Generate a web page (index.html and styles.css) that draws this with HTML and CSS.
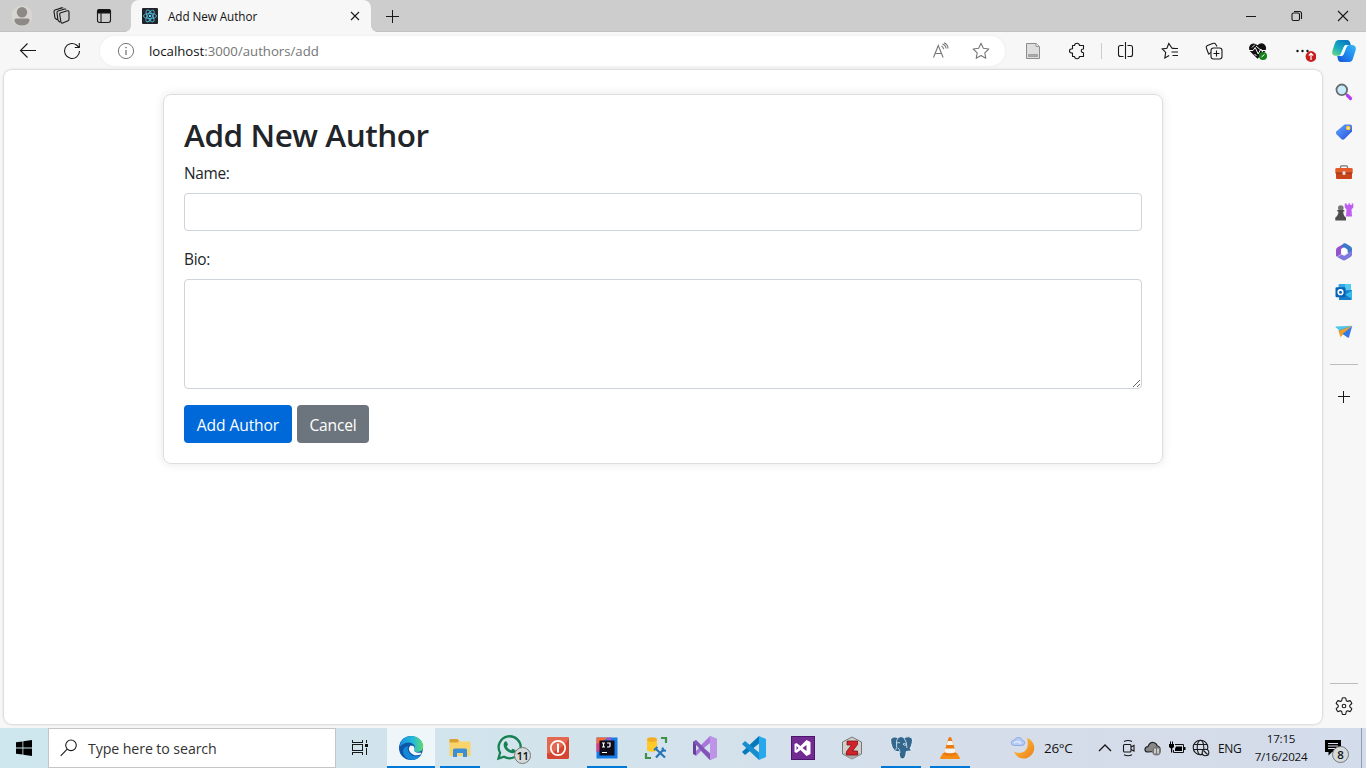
FILE: index.html
```html
<!DOCTYPE html>
<html lang="en">
<head>
<meta charset="utf-8">
<title>Add New Author</title>
<link rel="stylesheet" href="styles.css">
</head>
<body>
<header class="tabstrip">
  <div class="slot w44"><svg width="22" height="22" viewBox="0 0 22 22"><circle cx="11" cy="11" r="10.5" fill="#d8d6d3"/><circle cx="11" cy="7.3" r="5.2" fill="#8d8984"/><path d="M3.3 15.3q0-1.800 2-1.800h11.400q2 0 2 1.800-1.300 5.200-7.700 5.200t-7.700-5.200z" fill="#8d8984"/></svg></div>
  <div class="slot w36"><svg class="line" width="20" height="20" viewBox="0 0 20 20"><path d="m8.800 6.800 6.500-2q1.500-.3 1.700 1.200v7.300q0 1-1 1.500l-5.200 2.200q-1.500.4-1.900-1.100L7.700 8.500Q7.500 7.200 8.800 6.800z"/><path d="m6 14.500-1-7.500q-.1-1.400 1-1.900l6.700-2.100q1-.2 1.400.5M3 12.200l-1-6.500q-.1-1.300 1-1.800l6.700-2q1-.3 1.400.4M6 14.500l2.300 1.800M3 12.200l2.300 1.600"/></svg></div>
  <div class="slot w48"><svg class="line" width="16" height="16" viewBox="0 0 16 16"><rect x="1.500" y="1.500" width="13" height="13" rx="2.200"/><path d="M1.500 5V3.500q0-2 2-2h9q2 0 2 2V5z" fill="#111"/><path d="M5 5v9.500"/></svg></div>
  <div class="tab">
    <svg width="16" height="16" viewBox="0 0 16 16"><rect width="16" height="16" rx="1" fill="#20232a"/><g fill="none" stroke="#4fb3d0" stroke-width=".9"><ellipse cx="8" cy="8" rx="6.600" ry="2.600"/><ellipse cx="8" cy="8" rx="6.600" ry="2.600" transform="rotate(60 8 8)"/><ellipse cx="8" cy="8" rx="6.600" ry="2.600" transform="rotate(120 8 8)"/></g><circle cx="8" cy="8" r="1.200" fill="#61dafb"/></svg>
    <span class="tab-title">Add New Author</span>
    <svg class="line dark" width="10" height="10" viewBox="0 0 10 10"><path d="m1 1 8 8M9 1 1 9"/></svg>
  </div>
  <div class="slot w42"><svg class="line crisp" width="14" height="14" viewBox="0 0 14 14"><path d="M7.500 1v13M1 7.500h13"/></svg></div>
  <div class="window-controls">
    <div class="slot w46"><svg class="line crisp" width="10" height="10" viewBox="0 0 10 10"><path d="M0 5.500h10"/></svg></div>
    <div class="slot w46"><svg class="line" width="12" height="12" viewBox="0 0 12 12"><rect x="1" y="3" width="7.500" height="7.500" rx="1.500"/><path d="M3 1.500h5.500q2 0 2 2V9"/></svg></div>
    <div class="slot w46"><svg class="line" width="12" height="12" viewBox="0 0 12 12"><path d="m1 1 10 10M11 1 1 11"/></svg></div>
  </div>
</header>

<div class="browser">
  <div class="browser-main">
    <nav class="toolbar">
      <div class="slot w56"><svg class="line" width="18" height="18" viewBox="0 0 18 18"><path d="M17 8.500H1.500M8.500 1.500l-7 7 7 7"/></svg></div>
      <div class="slot w32"><svg class="line" width="18" height="18" viewBox="0 0 18 18"><path d="M16.500 9A7.500 7.500 0 1 1 13.500 3l2.700 2.400M16.300 1v4.500h-4.500"/></svg></div>
      <div class="address">
        <svg width="18" height="18" viewBox="0 0 18 18" fill="none" stroke="#767676"><circle cx="9" cy="9" r="7.600"/><path d="M9 8v5" stroke-width="1.300"/><circle cx="9" cy="5.600" r=".5"/></svg>
        <span class="url"><b>localhost</b>:3000/authors/add</span>
        <svg class="read" width="18" height="18" viewBox="0 0 18 18" fill="none" stroke="#777" stroke-width="1.100"><path d="M1.500 15.500 6.300 3.500l4.800 12M3.200 11.500h6.200M9.500 4q2 1 2 3.200M10.500 2q3.400 1.300 3.500 4.500M12 .8q4 1.700 4 5.700"/></svg>
        <svg width="18" height="18" viewBox="0 0 18 18" fill="none" stroke="#777" stroke-width="1.100" stroke-linejoin="round"><path d="m9 1.300 2.300 5 5.500.7-4 3.800 1 5.500L9 13.600l-4.800 2.700 1-5.500-4-3.800 5.500-.7z"/></svg>
      </div>
      <div class="slot w44 after-address"><svg width="16" height="18" viewBox="0 0 16 18"><path d="M1.500 1.500h9.500l3.500 3v12h-13z" fill="#dedede" stroke="#8c8c8c"/><path d="M3.500 12.500h9v2h-9z" fill="#aaa" stroke="#888" stroke-width=".6"/><path d="M11 1.500v3h3" fill="#eee" stroke="#999"/></svg></div>
      <div class="slot w44"><svg class="line" width="18" height="18" viewBox="0 0 18 18"><path d="M4.500 3.500h2Q6.700 1.300 9 1.300t2.500 2.200h4V7q-2.200-.1-2.200 1.800t2.200 2v3.700h-4q-.2 2.200-2.500 2.200t-2.500-2.200h-2V11Q1.500 11 1.500 8.900t3-2.100z" stroke-linejoin="round"/></svg></div>
      <i class="toolbar-divider"></i>
      <div class="slot w44"><svg class="line" width="18" height="18" viewBox="0 0 18 18"><path d="M6.500 3.500H3.500q-2 0-2 2v7q0 2 2 2h3M10.500 3.500H13.500q2 0 2 2v7q0 2-2 2h-3M8.500 0v17"/></svg></div>
      <div class="slot w44"><svg class="line" width="18" height="18" viewBox="0 0 18 18"><path d="M13.500 6.300H11L7.800 1.500 5.900 6.200l-4.700.7 3.500 3.500-.9 5.600L8.200 13.500M11.500 6.500h5.500M10.500 10h6.500M11.500 13.500H17"/></svg></div>
      <div class="slot w44"><svg class="line" width="18" height="18" viewBox="0 0 18 18"><rect x="6" y="6" width="11" height="11" rx="2.500"/><path d="M11.500 8.500v6M8.500 11.500h6M3.800 12.500 1.300 5.800Q.8 4.200 2.400 3.500l6-2.200q1.600-.4 2.300 1l1.300 2.200M3.800 12.500q.2-1 2-2"/></svg></div>
      <div class="slot w44"><svg width="18" height="18" viewBox="0 0 18 18"><path d="M8.500 16.800 1.200 9.500q-2.600-4 .5-7Q5.300.2 8.500 3.300 12-.2 15.500 2.500q3 3 .5 7z" fill="#111"/><path d="M0 8.500h4l2.200-3 3 6.500 2.600-5 1.200 1.500h4.500M3 5.500l3-3M5.500 12l2 2M7 4l7 6" fill="none" stroke="#f4f4f4"/><circle cx="14" cy="14" r="4" fill="#14801c"/><path d="m12.500 15 3-2.500" stroke="#fff"/></svg></div>
      <div class="slot w44 menu"><svg width="22" height="22" viewBox="0 0 22 22"><g fill="#111"><circle cx="3.500" cy="11" r="1.200"/><circle cx="8.500" cy="11" r="1.200"/><circle cx="13.500" cy="11" r="1.200"/></g><circle cx="17" cy="16.500" r="5.400" fill="#c71f1f"/><path d="M17 20v-6.500M14.800 15.500l2.200-2.200 2.200 2.200" fill="none" stroke="#fff" stroke-width="1.200"/></svg></div>
    </nav>

    <main class="page">
      <form class="card">
        <h2>Add New Author</h2>
        <label for="name">Name:</label>
        <input id="name" type="text">
        <label for="bio">Bio:</label>
        <textarea id="bio"></textarea>
        <div class="actions"><button type="button" class="btn primary"><span>Add Author</span></button><button type="button" class="btn secondary"><span>Cancel</span></button></div>
      </form>
    </main>
  </div>

  <aside class="sidebar">
    <div class="slot copilot"><svg width="24" height="24" viewBox="0 0 24 24"><defs><linearGradient id="cp1" x1="0" y1="1" x2=".7" y2="0"><stop stop-color="#74dc79"/><stop offset=".45" stop-color="#1bb0bd"/><stop offset="1" stop-color="#0878c4"/></linearGradient><linearGradient id="cp2" x1="0" y1="1" x2="1" y2="0"><stop stop-color="#1553d8"/><stop offset=".5" stop-color="#1f88f0"/><stop offset="1" stop-color="#35baf4"/></linearGradient></defs><path d="M7 1h8q2.300 0 3 2.200l.8 2.800h-4.300q-2 0-2.700 2L9 14.700q-.7 2-2.800 2H3.500Q-.5 16.500.3 12L3 4q1-3 4-3z" fill="url(#cp1)"/><path d="M17 23H9q-2.300 0-3-2.200L5.200 17H9q2 0 2.700-2L14.500 8q.7-2 2.500-2h3.500Q24.500 6.500 23.700 11L21 19.500Q20 23 17 23z" fill="url(#cp2)"/><path d="M10 16.700q1.200-.4 1.700-1.700L14.500 8q.7-2 2.500-2h-2.500q-2 0-2.700 2L9 14.700q-.4 1.500-1.500 2z" fill="#e9fbff"/></svg></div>
    <div class="slot"><svg width="18" height="18" viewBox="0 0 18 18"><path d="m11 11 1.500 1.500" stroke="#777" stroke-width="2"/><path d="m12.500 12.500 3 3" stroke="#b83df0" stroke-width="3.200" stroke-linecap="round"/><circle cx="6.800" cy="6.800" r="5.300" fill="#c8eafa" stroke="#666b70" stroke-width="1.800"/></svg></div>
    <div class="slot"><svg width="18" height="18" viewBox="0 0 18 18"><defs><linearGradient id="tg" x1="0" y1="0" x2="1" y2="1"><stop stop-color="#60a9fb"/><stop offset="1" stop-color="#294be2"/></linearGradient></defs><path d="M9.500 1.500H15q2 .2 2 2v5L9.500 16q-1.700 1.400-3.200 0L1.500 11.200q-1.200-1.500 0-3z" fill="url(#tg)"/><circle cx="13.200" cy="5" r="1.600" fill="#fff" stroke="#ffc52b" stroke-width="1.500"/></svg></div>
    <div class="slot"><svg width="18" height="18" viewBox="0 0 18 18"><path d="M5.500 6V3.800q0-1 1-1h5q1 0 1 1V6" fill="none" stroke="#777" stroke-width="1.200"/><rect x=".3" y="5" width="17.400" height="6" rx="1.300" fill="#e35b29"/><path d="M1 10h16v5q0 1-1 1H2q-1 0-1-1z" fill="#c9431a"/><path d="M1 10h16" stroke="#8f3217"/><rect x="7.500" y="8.300" width="3" height="3.700" rx="1" fill="#ddd"/></svg></div>
    <div class="slot"><svg width="20" height="20" viewBox="0 0 20 20"><path d="M10.800 1.500h2V3h1.500V1.500h2V3h1.500V1.500h1.500v4L17.500 7.500l.5 7H12l.5-7-1.700-2z" fill="#bd5df2"/><circle cx="6.800" cy="6" r="2.800" fill="#777"/><path d="M3.300 8h7v1.500H9.200q0 4 2.800 6V18.500H1.300v-3q3.100-2 3.100-6H3.300z" fill="#4d4d50"/></svg></div>
    <div class="slot"><svg width="18" height="18" viewBox="0 0 18 18"><path d="M9.500.4 3 4Q1 5 1 7.200v5.300q0 1 1 1.300l4-2.500V7q0-1.200 1-1.700L12 2z" fill="#9353cf"/><path d="M8.500.6q1.300-.6 2.800.2L15.700 3.500Q17 4.400 17 6v5.500l-4.500-2.300V7.500q0-.8-.8-1.300L6.500 3.500z" fill="#3b79c9"/><path d="M17 7.500v4.200q0 1.500-1.500 2.300L10.500 17q-1.500.8-3 0L2.200 13.900 6.500 11.500l2 1.100q.7.300 1.400 0z" fill="#8077df"/><path d="m7 5.800 2.500-1.200 2.800 1.800v2.700L9 11.500 6.200 10V7z" fill="#fff"/></svg></div>
    <div class="slot"><svg width="18" height="18" viewBox="0 0 18 18"><rect x="3.500" y="1" width="12.500" height="12" rx="1" fill="#31a8e6"/><path d="M10 1h6v6h-6z" fill="#55caef"/><path d="M4 8.500 17 7v8.500q0 1.500-1.500 1.500H4z" fill="#167dca"/><path d="m10 11.500 7-4V16z" fill="#35b8ec"/><rect x=".5" y="4.200" width="10" height="10" rx="1.200" fill="#0863b5"/><circle cx="5.500" cy="9.200" r="2.300" fill="none" stroke="#fff" stroke-width="1.600"/></svg></div>
    <div class="slot"><svg width="18" height="18" viewBox="0 0 18 18"><path d="M.7 4.300q-.6-.8.5-.9L16.500 2.800 5.500 8.500z" fill="#54c6ec"/><path d="M3.500 7.500 17 2.800 6 10z" fill="#3793ce"/><path d="m3.500 8 2 6.200L8 11.500l9-8.700z" fill="#eda126"/><path d="m7.500 11 5.500 3.700q.7.400 1-.4L17.300 2.800z" fill="#3479e8"/></svg></div>
    <i class="side-divider first"></i>
    <div class="slot plus"><svg class="line crisp" width="12" height="12" viewBox="0 0 12 12"><path d="M5.500 0v12M0 5.500h12"/></svg></div>
    <i class="side-divider last"></i>
    <div class="slot gear"><svg class="line" width="18" height="18" viewBox="0 0 18 18"><path d="M6.700 3.700 7.300 1q1.700-.5 3.400 0l.6 2.700 1.200.7 2.600-.8q1.300 1.200 1.700 2.900l-2 1.900v1.400l2 1.900q-.4 1.700-1.700 2.900l-2.600-.8-1.200.7-.6 2.700q-1.700.5-3.400 0l-.6-2.700-1.200-.7-2.600.8q-1.300-1.200-1.700-2.900l2-1.900V8.400l-2-1.900q.4-1.700 1.700-2.900l2.600.8z" stroke-linejoin="round"/><circle cx="9" cy="9" r="1.800"/></svg></div>
  </aside>
</div>

<footer class="taskbar">
  <div class="slot w48"><svg width="16" height="16" viewBox="0 0 16 16"><path d="M0 2.300 6.500 1.400v6.200H0zM7.300 1.300 16 0v7.600H7.300zM0 8.400h6.500v6.200L0 13.700zM7.300 8.400H16V16l-8.700-1.300z"/></svg></div>
  <div class="search"><svg class="line" width="18" height="18" viewBox="0 0 18 18"><circle cx="11" cy="6.300" r="5.300"/><path d="M7.200 10.200.7 16.800"/></svg><span>Type here to search</span></div>
  <div class="slot w48"><svg class="line crisp" width="18" height="18" viewBox="0 0 18 18"><path d="M1.500 1v2.500h10V1M1.500 5.500h10v6h-10zM1.500 16v-2.500h10V16M15.500 1v3M15.500 9v7"/><path d="M14 5h3v3h-3z" fill="#111" stroke="none"/></svg></div>
  <div class="apps">
    <div class="app active"><svg width="26" height="26" viewBox="0 0 26 26"><defs><linearGradient id="eg" x2="1"><stop stop-color="#168de0"/><stop offset=".6" stop-color="#26bdd5"/><stop offset="1" stop-color="#63d96b"/></linearGradient></defs><circle cx="13" cy="13" r="12" fill="#0d57a7"/><path d="M1.500 12Q3 1 13 1q9 0 12 8 1.300 8-5.500 8-4 0-3.500-2.500 2.500-3-1-5.500-6-4-13.500 3z" fill="url(#eg)"/><path d="M10.500 11q-2 2.500.5 6.500 4.500 6.500 12.500 2Q20 25 13.500 25 5 23 5 16q0-4 5.500-5z" fill="#1687d9"/><path d="M12.500 10.500q-3 3-.5 6.500 4.500 5.500 11.500 2-1-.7-.7-1.500-6 1-6.800-2.500 1.500-2-.5-4z" fill="#f2f7fa"/></svg></div>
    <div class="app run"><svg width="24" height="24" viewBox="0 0 24 24"><path d="M1.500 4h9l2 1.500H21q1.500 0 1.500 1.500v13h-21z" fill="#f9d36b"/><path d="M1.500 4q0-1 1-1h7l1.500 2-1.500 1.500h-8z" fill="#dda02e"/><path d="M5 21v-7q0-1.500 1.500-1.500h11q1.500 0 1.500 1.500v7h-4v-4H9v4z" fill="#3b8fd7"/></svg></div>
    <div class="app"><svg width="26" height="26" viewBox="0 0 26 26"><path d="m2.500 23.500 1.600-5.800A11 11 0 1 1 8 21.700z" fill="none" stroke="#168253" stroke-width="2.300"/><path d="M8.500 7q1.500-1.400 2.500.3l1 2.200-1.300 2q1.600 2.900 4.400 3.800l1.500-1.500 2.700 1.300q1 2.500-2.300 3.200-4.500.2-8-4.300Q6.500 10 8.500 7z" fill="#168253"/></svg><span class="badge whatsapp">11</span></div>
    <div class="app"><svg width="24" height="24" viewBox="0 0 24 24"><rect x="1" y="1" width="22" height="22" rx="1.500" fill="#d64530"/><path d="M1 18V2.500Q1 1 2.500 1h19Q23 1 23 2.500q-6 11-22 15.500z" fill="#e4684f"/><circle cx="12" cy="12" r="7.200" fill="none" stroke="#fff" stroke-width="1.700"/><path d="M12 7.500v9" stroke="#fff" stroke-width="2"/></svg></div>
    <div class="app run"><svg width="22" height="22" viewBox="0 0 22 22"><path d="M.5.500h21v21H.5z" fill="#147be9"/><path d="M.5 9 12 .5H.5z" fill="#f96a38"/><path d="M.5 7 8 3l2 9-9.500 3z" fill="#e23d83"/><path d="M11 .5h5L12 8z" fill="#a153ca"/><rect x="3.500" y="3.500" width="15" height="15" fill="#110c19"/><path d="M6 6h3M7.500 6v4M6 10h3M11 6h3v3q0 1-1.500 1H11M6 15.500h5" stroke="#fff" stroke-width="1.200" fill="none"/></svg></div>
    <div class="app"><svg width="24" height="24" viewBox="0 0 24 24"><path d="M3 3.500v11q5 2.500 10 0v-11z" fill="#ffc928"/><ellipse cx="8" cy="3.500" rx="5" ry="2.300" fill="#f4ad23"/><path d="M17 2h5v5M2 17v5h5" fill="none" stroke="#3f9149" stroke-width="2.200"/><path d="m12 13 9 8.500M20 13l-8 8.500" stroke="#2575b8" stroke-width="2.200"/><path d="m10 14 3.500-3M18.500 11.500l.5 3 3 .3" stroke="#2575b8" stroke-width="2" fill="none"/></svg></div>
    <div class="app"><svg width="26" height="26" viewBox="0 0 26 26"><path d="m1 7 3-2 5 5 9-9 7 3v18l-7 3L9 16l-5 5-3-2z" fill="#a877d9"/><path d="m1 7 3-1v14l-3-1z" fill="#674198"/><path d="m1 7 3-2 14 14v6z" fill="#8055b6"/><path d="m18 1 7 3v18l-7 3z" fill="#bd94e6"/><path d="m4 10 3 3-3 3zM12 13l6-5v10z" fill="#d3e2ec"/></svg></div>
    <div class="app"><svg width="26" height="26" viewBox="0 0 26 26"><path d="m1 17 17-16v7.500L4 20z" fill="#0878bd"/><path d="m1 9 3-3 14 11.500V25z" fill="#168dce"/><path d="m18 1 7 3v18l-7 3z" fill="#27a8ea"/></svg></div>
    <div class="app"><svg width="24" height="24" viewBox="0 0 24 24"><rect x=".5" y=".5" width="23" height="23" fill="#722b91" stroke="#4e136e"/><path d="m3.500 8 2-1 4 3 6-6 4 2v12l-4 2-6-6-4 3-2-1zM5.500 10v4l2-2zm6 2 4 3V9z" fill="#fff" fill-rule="evenodd"/></svg></div>
    <div class="app"><svg width="24" height="24" viewBox="0 0 24 24"><path d="m12 1 9.500 5v12L12 23l-9.500-5V6z" fill="#d0cfcc" stroke="#777"/><path d="M3 18 12 13l9 5-9 5z" fill="#aaa"/><path d="M7 5h10.500v3.500l-5 6.500h5v4h-11v-3.500l5-6.500H7z" fill="#d3222a" stroke="#7b1118" stroke-width=".8"/></svg></div>
    <div class="app run"><svg width="26" height="26" viewBox="0 0 26 26"><path d="M2.500 4q3-3.500 7.500-1.500 3-2 6 0 5-2 8 .5 1.500 3.500-2 11l2.500.7q-2 2-5 1.600l-1.200.2q-.5 7.500-4 7.500-3 .3-3.300-7.200l-1.500-.3H8Q3 14 2.500 4z" fill="#34678e" stroke="#eff6fa" stroke-width=".9"/><path d="M10 3q-2 2-1.500 6 1 4-1 6M16 3q3 4 3 10M10 13q2 1 2 5M18 9q-2-1-3 0 1 2 3 1M9 8q2-1 3 0" fill="none" stroke="#e9f1f6" stroke-width=".8"/></svg></div>
    <div class="app run"><svg width="24" height="24" viewBox="0 0 24 24"><path d="M5 17h14l3 5q0 1-1 1H3q-1 0-1-1z" fill="#f68c13"/><path d="M10.700 1.500q1.300-1 2.600 0L18.500 18.500q-6.500 3-13 0z" fill="#eb7b11"/><path d="m9.800 5 4.500.1 1.200 4h-7zM7.300 12.500h9.400l1.200 3.800q-6 2-11.800 0z" fill="#f4f3ed"/></svg></div>
  </div>
  <div class="tray">
    <svg class="weather" width="26" height="26" viewBox="0 0 26 26"><defs><linearGradient id="moon" y2="1"><stop stop-color="#ffcb42"/><stop offset="1" stop-color="#ec7c18"/></linearGradient></defs><path d="M17 3A10.500 10.500 0 1 1 4 17q10 3 13-4 1.500-4 0-10z" fill="url(#moon)"/><path d="M4 10.500Q.8 10 1.200 7.500T4.500 5q1.200-3 4.500-2.500 2.800.3 3.500 3 2.500.3 2.200 2.500-.3 2.500-2.800 2.500z" fill="#b5ccf5" stroke="#7b9bdc" stroke-width=".7"/><path d="M4 8q4-3 7 .5" fill="none" stroke="#e9f1ff" stroke-width="1.200"/></svg>
    <span class="temp">26°C</span>
    <div class="tray-icon chevron"><svg class="line" width="14" height="8" viewBox="0 0 14 8"><path d="m1 7 6-6 6 6" stroke-width="1.400"/></svg></div>
    <div class="tray-icon"><svg class="line" width="14" height="18" viewBox="0 0 14 18"><rect x="1.500" y="5.500" width="7.500" height="7.500" rx="1"/><path d="m9 8 3-1.500V12l-3-1.500M2 2.500q4-2 8 0M2 15.800q4 2 8 0"/></svg></div>
    <div class="tray-icon"><svg width="18" height="16" viewBox="0 0 18 16"><path d="M4 12Q.8 12 1 9.200q.5-2.500 3-2.500Q5.500 2 9.500 2.500q3 .5 3.800 3.500Q16 6.500 16 9v2z" fill="#888" stroke="#222" stroke-width="1.200"/><circle cx="12.500" cy="11" r="4.600" fill="#777"/><path d="M11 8.500v5M14 8.500v5" stroke="#fff" stroke-width="1.200"/></svg></div>
    <div class="tray-icon"><svg width="18" height="16" viewBox="0 0 18 16"><path d="M7 4.500h8.500v8h-10V10" fill="none" stroke="#111"/><path d="M8 6.500h6v4.500H7V9zM16 7h1.500v3H16zM1 4h5v3L4.200 8.500v4h-1.200V8.500L1 7zM2 1.500h1V4H2zM4 1.500h1V4H4z"/></svg></div>
    <div class="tray-icon"><svg class="line" width="18" height="18" viewBox="0 0 18 18"><circle cx="8.500" cy="8.500" r="7.300"/><ellipse cx="8.500" cy="8.500" rx="3.300" ry="7.300"/><path d="M2 5.500h13M1 10.500h14"/><circle cx="13.500" cy="13.500" r="3.300" fill="#d5deea"/><path d="m11.500 11.500 4 4"/></svg></div>
    <span class="lang">ENG</span>
    <div class="clock"><span class="time">17:15</span><span class="date">7/16/2024</span></div>
    <div class="notifications"><svg width="16" height="16" viewBox="0 0 16 16"><path d="M0 0h16v12H7l-3.500 3.500V12H0z"/><path d="M3 3.500h10M3 6h10M3 8.500h7" stroke="#dce3ee"/></svg><span class="badge">8</span></div>
    <i class="show-desktop"></i>
  </div>
</footer>
</body>
</html>
```
FILE: styles.css
```css
* { box-sizing: border-box; }
body { margin: 0; width: 1366px; height: 768px; overflow: hidden; display: flex; flex-direction: column; background: #f7f7f7; color: #111; font-family: "Open Sans", "Noto Sans", sans-serif; }
svg { display: block; flex: none; }
span { white-space: nowrap; }
.line { fill: none; stroke: #191919; stroke-width: 1.1; }
.crisp { shape-rendering: crispEdges; }
.slot { display: flex; align-items: center; justify-content: center; flex: none; }
.w32 { width: 32px; }
.w36 { width: 36px; }
.w42 { width: 42px; }
.w44 { width: 44px; }
.w46 { width: 46px; }
.w48 { width: 48px; }
.w56 { width: 56px; }

.tabstrip { height: 32px; flex: none; display: flex; background: #cdcdcd; border-bottom: 1px solid #c2c2c2; }
.tab { width: 240px; height: 32px; margin-left: 3px; padding: 0 11px; display: flex; align-items: center; background: #f7f7f7; border-radius: 8px 8px 0 0; position: relative; }
.tab::before, .tab::after { content: ""; position: absolute; bottom: 0; width: 6px; height: 6px; }
.tab::before { left: -6px; background: radial-gradient(circle at 0 0, transparent 5.5px, #f7f7f7 6px); }
.tab::after { right: -6px; background: radial-gradient(circle at 100% 0, transparent 5.5px, #f7f7f7 6px); }
.tab-title { flex: 1; margin-left: 10px; padding-bottom: 1px; font-size: 11.7px; letter-spacing: -.05px; }
.window-controls { display: flex; margin-left: auto; }

.browser { flex: 1; min-height: 0; display: flex; }
.browser-main { width: 1322px; flex: none; display: flex; flex-direction: column; }
.toolbar { height: 38px; flex: none; display: flex; align-items: center; }
.address { width: 905px; height: 30px; flex: none; margin-left: 12px; padding: 0 15px 0 17px; display: flex; align-items: center; background: #fff; border-radius: 15px; box-shadow: 0 0 3px #e9e9e9; }
.url { flex: 1; margin-left: 14px; color: #757575; font-size: 13.2px; }
.url b { color: #111; font-weight: 400; }
.read { margin-right: 22px; }
.after-address { margin-left: 6px; }
.toolbar-divider { width: 1px; height: 16px; margin: 0 2px; background: #ccc; flex: none; }
.menu { padding-left: 5px; }
.page { flex: 1; margin: 0 0 4px 4px; padding-top: 24px; background: #fff; border-radius: 8px; box-shadow: 0 0 2px 1px #d7d7d7; }

.card { width: 1000px; height: 370px; margin-left: 159px; padding: 20px; border: 1px solid #ddd; border-radius: 8px; box-shadow: 0 0 10px rgba(0,0,0,.1); color: #212529; display: flex; flex-direction: column; font-size: 16px; }
.card h2 { margin: 0 0 7.4px; padding-top: 1px; font-size: 31.5px; line-height: 38px; font-weight: 600; letter-spacing: -.45px; }
.card label { height: 24px; line-height: 26px; margin-bottom: 8px; font-size: 15.4px; letter-spacing: -.3px; }
.card input, .card textarea { width: 100%; flex: none; margin: 0 0 16px; border: 1px solid #ced4da; border-radius: 4px; background: #fff; outline: none; }
.card input { height: 38px; }
.card textarea { height: 110px; resize: vertical; }
.actions { display: flex; gap: 5px; }
.btn { height: 38px; padding: 1px 0 0; border: 0; border-radius: 4px; color: #fff; font: 15.6px "Open Sans", sans-serif; letter-spacing: -.1px; }
.primary { width: 108px; background: #0069d9; }
.secondary { width: 72px; background: #6c757d; letter-spacing: -.2px; }

.sidebar { width: 44px; display: flex; flex-direction: column; align-items: center; }
.sidebar .slot { width: 44px; height: 40px; }
.sidebar .copilot { height: 38px; margin-bottom: 2px; }
.side-divider { width: 28px; height: 1px; background: #bcbcbc; flex: none; }
.side-divider.first { margin-top: 12px; }
.sidebar .plus { height: 32px; margin-top: 16px; }
.side-divider.last { margin-top: auto; }
.sidebar .gear { height: 44px; }

.taskbar { height: 40px; flex: none; display: flex; background: linear-gradient(90deg, #cee6ed, #d3e3ec 45%, #d5dce9 80%, #d3dceb); }
.search { width: 288px; padding-left: 11px; border: 1px solid #c3c5c7; background: #fff; display: flex; align-items: center; }
.search span { margin-left: 10px; font-size: 14.2px; letter-spacing: -.1px; color: #333; }
.apps { display: flex; gap: 1px; margin-left: 3px; }
.app { width: 48px; height: 40px; display: flex; align-items: center; justify-content: center; position: relative; }
.active { background: #eef6f9; border-bottom: 2px solid #0078d7; padding-top: 2px; }
.run { background: linear-gradient(#0078d7, #0078d7) center bottom / 40px 2px no-repeat; }
.badge { position: absolute; display: flex; align-items: center; justify-content: center; width: 17px; height: 17px; border: 1px solid #777; border-radius: 50%; background: #d4d9dc; color: #111; font-size: 11.5px; font-weight: 600; }
.badge.whatsapp { left: 29px; top: 19px; letter-spacing: -.5px; }
.tray { flex: 1; display: flex; align-items: center; padding-left: 36px; color: #111; }
.weather { margin-right: 8px; }
.temp { width: 48px; font-size: 13.5px; letter-spacing: -.3px; }
.tray-icon { width: 24px; display: flex; justify-content: center; flex: none; }
.tray-icon.chevron { width: 25px; }
.lang { width: 30px; margin-left: 5px; font-size: 12px; letter-spacing: -.4px; }
.clock { width: 64px; height: 40px; margin-left: 1px; display: flex; flex-direction: column; align-items: center; font-size: 11.6px; line-height: 18px; padding-top: 2px; letter-spacing: -.25px; }
.notifications { width: 34px; height: 40px; margin-left: 12px; padding-top: 12px; position: relative; }
.notifications .badge { left: 7px; top: 18px; }
.show-desktop { width: 1px; height: 40px; margin-left: auto; margin-right: 4px; background: #929bad; }
```
